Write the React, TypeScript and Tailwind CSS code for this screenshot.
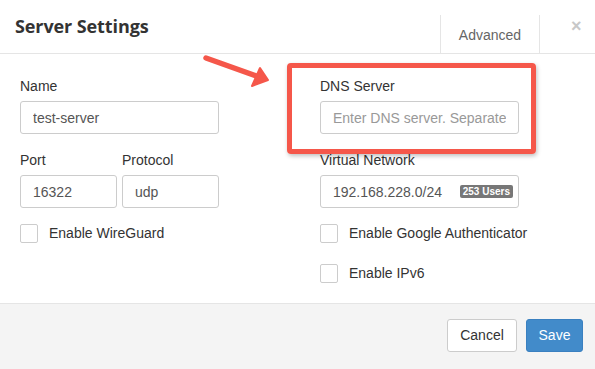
import React from 'react';

const Field: React.FC<{ label: string; children: React.ReactNode; className?: string }> = ({ label, children, className }) => (
  <div className={className}>
    <div className="text-[14px] leading-[20px] text-[#333] mb-[5px]">{label}</div>
    {children}
  </div>
);

const inputCls =
  'w-full h-[33px] border border-[#ccc] rounded-[3px] px-[12px] text-[14px] text-[#555] bg-white outline-none';

const Check: React.FC<{ label: string }> = ({ label }) => (
  <label className="flex items-center gap-[11px] h-[19px] text-[14px] text-[#333] whitespace-nowrap">
    <span className="shrink-0 w-[18px] h-[19px] border border-[#ccc] rounded-[2px] bg-white" />
    {label}
  </label>
);

const App: React.FC = () => {
  return (
    <div className="relative w-[595px] h-[369px] bg-white overflow-hidden font-['Liberation_Sans',Arial,sans-serif]">
      {/* Header */}
      <div className="h-[54px] border-b border-[#e5e5e5] flex items-stretch">
        <h1 className="pl-[15px] pt-[13px] text-[18px] font-bold text-[#333] font-['Open_Sans',sans-serif] tracking-[-0.1px]">
          Server Settings
        </h1>
        <div className="ml-auto flex items-end">
          <div className="w-[100px] h-[38px] mr-[55px] border-x border-[#e5e5e5] flex items-center justify-center text-[14px] text-[#666] pt-[2px]">
            Advanced
          </div>
        </div>
        <div className="absolute left-[571px] top-[17px] text-[18px] font-bold text-[#c8c8c8] leading-none">×</div>
      </div>

      {/* Body */}
      <div className="h-[249px] pt-[22px] px-[20px] flex gap-[101px]">
        <div className="w-[199px] flex flex-col">
          <Field label="Name">
            <input className={inputCls} defaultValue="test-server" />
          </Field>
          <div className="flex gap-[5px] mt-[16px]">
            <Field label="Port" className="w-[97px]">
              <input className={inputCls} defaultValue="16322" />
            </Field>
            <Field label="Protocol" className="w-[97px]">
              <input className={inputCls} defaultValue="udp" />
            </Field>
          </div>
          <div className="mt-[16px]">
            <Check label="Enable WireGuard" />
          </div>
        </div>
        <div className="w-[199px] flex flex-col">
          <Field label="DNS Server">
            <input className={`${inputCls} placeholder:text-[#999]`} placeholder="Enter DNS server. Separate" />
          </Field>
          <Field label="Virtual Network" className="mt-[16px]">
            <div className="relative">
              <input className={inputCls} defaultValue="192.168.228.0/24" />
              <span className="absolute right-[6px] top-[10px] h-[13px] px-[3px] rounded-[2px] bg-[#777] text-white text-[10px] font-bold leading-[13px]">
                253 Users
              </span>
            </div>
          </Field>
          <div className="mt-[16px] flex flex-col gap-[21px]">
            <Check label="Enable Google Authenticator" />
            <Check label="Enable IPv6" />
          </div>
        </div>
      </div>

      {/* Footer */}
      <div className="h-[66px] border-t border-[#e5e5e5] bg-[#f4f4f4] flex justify-end items-start pt-[15px] pr-[12px] gap-[9px]">
        <button className="h-[33px] w-[70px] border border-[#ccc] rounded-[3px] bg-white text-[14px] text-[#333]">Cancel</button>
        <button className="h-[33px] w-[57px] border border-[#3a80c0] rounded-[3px] bg-[#428bca] text-[14px] text-white">Save</button>
      </div>

      {/* Annotation overlay */}
      <div className="absolute left-[287px] top-[63px] w-[249px] h-[91px] border-[5px] border-[#f5574a] rounded-[4px] shadow-[1px_2px_4px_rgba(0,0,0,0.25)] pointer-events-none" />
      <svg className="absolute left-0 top-0 pointer-events-none" width="595" height="369">
        <g fill="none" stroke="#f5574a" strokeWidth="5.5" strokeLinecap="round" strokeLinejoin="round">
          <line x1="206" y1="58" x2="262" y2="78" />
        </g>
        <polygon points="268,80 260,68 252,86" fill="#f5574a" stroke="#f5574a" strokeWidth="2" strokeLinejoin="round" />
      </svg>
    </div>
  );
};

export default App;
